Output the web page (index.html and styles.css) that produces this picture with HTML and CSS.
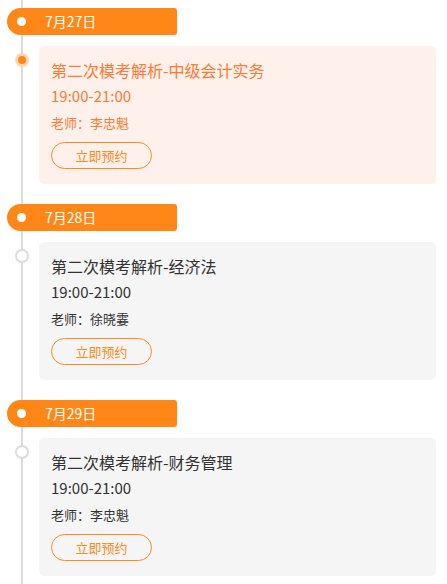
FILE: index.html
```html
<!DOCTYPE html>
<html lang="zh">
<head>
<meta charset="utf-8">
<link rel="stylesheet" href="styles.css">
</head>
<body>
<div class="timeline">
  <section class="group">
    <div class="date"><span class="date-dot"></span><span class="date-text">7月27日</span></div>
    <div class="row">
      <div class="rail"><span class="node active"></span></div>
      <div class="card active">
        <div class="title">第二次模考解析-中级会计实务</div>
        <div class="time">19:00-21:00</div>
        <div class="teacher">老师：李忠魁</div>
        <button class="btn">立即预约</button>
      </div>
    </div>
  </section>
  <section class="group">
    <div class="date"><span class="date-dot"></span><span class="date-text">7月28日</span></div>
    <div class="row">
      <div class="rail"><span class="node"></span></div>
      <div class="card">
        <div class="title">第二次模考解析-经济法</div>
        <div class="time">19:00-21:00</div>
        <div class="teacher">老师：徐晓霎</div>
        <button class="btn">立即预约</button>
      </div>
    </div>
  </section>
  <section class="group">
    <div class="date"><span class="date-dot"></span><span class="date-text">7月29日</span></div>
    <div class="row">
      <div class="rail"><span class="node"></span></div>
      <div class="card">
        <div class="title">第二次模考解析-财务管理</div>
        <div class="time">19:00-21:00</div>
        <div class="teacher">老师：李忠魁</div>
        <button class="btn">立即预约</button>
      </div>
    </div>
  </section>
</div>
</body>
</html>
```
FILE: styles.css
```css
html, body {
  margin: 0;
  padding: 0;
  background: #fff;
}
body {
  font-family: "Noto Sans CJK SC", "Noto Sans", sans-serif;
  color: #333;
}
.timeline {
  position: relative;
  padding-top: 8px;
  width: 447px;
  height: 584px;
  overflow: hidden;
  box-sizing: border-box;
}
.timeline::before {
  content: "";
  position: absolute;
  left: 21px;
  top: 0;
  bottom: 0;
  width: 2px;
  background: #dcdcdc;
}
.group {
  position: relative;
  display: flex;
  flex-direction: column;
  margin-bottom: 20px;
}
.date {
  margin-left: 7px;
  width: 170px;
  height: 27px;
  background: #ff8717;
  border-radius: 14px 3px 3px 14px;
  display: flex;
  align-items: center;
  position: relative;
}
.date-dot {
  width: 9px;
  height: 9px;
  border-radius: 50%;
  background: #fff;
  margin-left: 10px;
}
.date-text {
  margin-left: 19px;
  color: #fff;
  font-size: 14px;
  line-height: 27px;
}
.row {
  display: flex;
  margin-top: 11px;
  margin-right: 11px;
}
.rail {
  width: 39px;
  flex: none;
  display: flex;
  justify-content: center;
  padding-left: 5px;
  box-sizing: border-box;
  padding-top: 7px;
  position: relative;
}
.node {
  width: 14px;
  height: 14px;
  border-radius: 50%;
  box-sizing: border-box;
  background: #fff;
  border: 2px solid #dcdcdc;
  position: relative;
  z-index: 1;
}
.node.active {
  background: #ff8717;
  border: 3px solid #ffd5b3;
}
.card {
  flex: 1;
  background: #f5f5f5;
  border-radius: 5px;
  padding: 13px 12px 15px;
  display: flex;
  flex-direction: column;
  align-items: flex-start;
}
.card.active {
  background: #fef1ec;
}
.title {
  font-size: 16px;
  line-height: 22px;
  color: #333;
}
.time {
  font-size: 15px;
  line-height: 22px;
  margin-top: 4px;
  color: #333;
}
.teacher {
  font-size: 13px;
  line-height: 20px;
  margin-top: 6px;
  color: #333;
}
.card.active .title,
.card.active .time,
.card.active .teacher {
  color: #ff7a32;
}
.btn {
  margin-top: 9px;
  width: 101px;
  height: 27px;
  border: 1px solid #ff8a1f;
  border-radius: 14px;
  background: transparent;
  color: #ff8a1f;
  font-family: inherit;
  font-size: 13px;
  padding: 0;
  line-height: 25px;
}
```
